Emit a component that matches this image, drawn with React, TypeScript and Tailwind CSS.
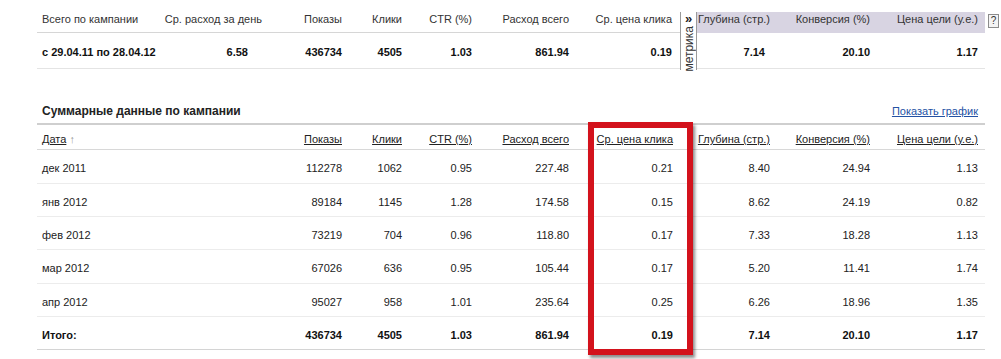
import React from 'react';

// Сводка по кампании: верхняя строка итогов + помесячная таблица
const TOP_COLS = 'grid-cols-[118px_102px_80px_60px_70px_97px_103px]';
const RIGHT_COLS = 'grid-cols-[73px_100px_108px]';
const MAIN_COLS = 'grid-cols-[238px_62px_60px_70px_97px_104px_97px_100px_108px]';

const HEADERS = ['Показы', 'Клики', 'CTR (%)', 'Расход всего', 'Ср. цена клика', 'Глубина (стр.)', 'Конверсия (%)', 'Цена цели (у.е.)'];

const ROWS: string[][] = [
  ['дек 2011', '112278', '1062', '0.95', '227.48', '0.21', '8.40', '24.94', '1.13'],
  ['янв 2012', '89184', '1145', '1.28', '174.58', '0.15', '8.62', '24.19', '0.82'],
  ['фев 2012', '73219', '704', '0.96', '118.80', '0.17', '7.33', '18.28', '1.13'],
  ['мар 2012', '67026', '636', '0.95', '105.44', '0.17', '5.20', '11.41', '1.74'],
  ['апр 2012', '95027', '958', '1.01', '235.64', '0.25', '6.26', '18.96', '1.35'],
];

const TOTAL = ['Итого:', '436734', '4505', '1.03', '861.94', '0.19', '7.14', '20.10', '1.17'];

const rowHeights = ['h-[34px]', 'h-[33px]', 'h-[33px]', 'h-[34px]', 'h-[33px]', 'h-[33px]'];

export default function App() {
  return (
    <div className="relative w-[1001px] h-[359px] overflow-hidden bg-white font-['Liberation_Sans',Arial,sans-serif] text-[11px] leading-[13px] text-[#222]">
      {/* Top summary */}
      <div className="flex">
        <div className="ml-[37px] w-[643px]">
          <div className={`grid ${TOP_COLS} pl-[5px] h-[33px] pt-[13px] border-b border-[#d6d6d6] text-[#333]`}>
            <div>Всего по кампании</div>
            <div className="text-right">Ср. расход за день</div>
            <div className="text-right">Показы</div>
            <div className="text-right">Клики</div>
            <div className="text-right">CTR (%)</div>
            <div className="text-right">Расход всего</div>
            <div className="text-right">Ср. цена клика</div>
          </div>
          <div className={`grid ${TOP_COLS} pl-[5px] h-[36px] pt-[13px] border-b border-[#e4e4e4] font-bold text-[#111]`}>
            <div>с 29.04.11 по 28.04.12</div>
            <div className="text-right pr-[14px]">6.58</div>
            <div className="text-right">436734</div>
            <div className="text-right">4505</div>
            <div className="text-right">1.03</div>
            <div className="text-right">861.94</div>
            <div className="text-right">0.19</div>
          </div>
        </div>

        {/* Metrika vertical tab */}
        <div className="mt-[12px] w-[17px] h-[58px] border-x border-[#9a9a9a] bg-white flex flex-col items-center">
          <div className="text-[13px] leading-[10px] font-bold text-[#222] mt-[2px]">»</div>
          <div className="mt-[2px] text-[12px] leading-[14px] text-[#333] [writing-mode:vertical-rl] rotate-180">метрика</div>
        </div>

        <div className="w-[288px]">
          <div className="h-[33px] pt-[12px]">
            <div className={`grid ${RIGHT_COLS} h-[21px] pt-[1px] pr-[7px] bg-[#d8d4e2] text-[#333]`}>
              <div className="text-right">Глубина (стр.)</div>
              <div className="text-right">Конверсия (%)</div>
              <div className="text-right">Цена цели (у.е.)</div>
            </div>
          </div>
          <div className={`grid ${RIGHT_COLS} h-[36px] pt-[13px] pr-[7px] border-b border-[#e4e4e4] font-bold text-[#111]`}>
            <div className="text-right pr-[5px]">7.14</div>
            <div className="text-right">20.10</div>
            <div className="text-right">1.17</div>
          </div>
        </div>

        <div className="ml-[3px] mt-[14px] w-[11px] h-[14px] border border-[#8c8c8c] bg-[#f4f4f4] text-[10px] leading-[12px] text-center text-[#333]">?</div>
      </div>

      {/* Monthly table */}
      <div className="ml-[37px] w-[948px] mt-[34px]">
        <div className="flex justify-between items-start h-[21px] pl-[5px] pr-[7px] border-b-[2px] border-[#cfcfcf]">
          <div className="text-[12px] leading-[14px] font-bold text-[#222]">Суммарные данные по кампании</div>
          <a href="#" className="text-[#2452a4] underline leading-[14px]">Показать график</a>
        </div>

        <div className={`grid ${MAIN_COLS} h-[25px] pt-[8px] pl-[5px] pr-[7px] border-b border-[#d8d8d8] text-[#222]`}>
          <div>
            <span className="underline">Дата</span> <span className="text-[#999]">↑</span>
          </div>
          {HEADERS.map((h) => (
            <div key={h} className="text-right">
              <span className="underline">{h}</span>
            </div>
          ))}
        </div>

        {[...ROWS, TOTAL].map((row, i) => {
          const isTotal = i === ROWS.length;
          return (
            <div
              key={row[0]}
              className={`grid ${MAIN_COLS} ${rowHeights[i]} pt-[12px] pl-[5px] pr-[7px] border-b ${
                isTotal ? 'border-[#d4d4d4] font-bold text-[#111]' : 'border-[#ececec]'
              }`}
            >
              {row.map((cell, j) => (
                <div key={j} className={j === 0 ? '' : 'text-right'}>
                  {cell}
                </div>
              ))}
            </div>
          );
        })}
      </div>

      {/* Red highlight frame */}
      <div className="absolute left-[588px] top-[122px] w-[105px] h-[233px] border-[6px] border-[#d3121c] shadow-[2px_3px_3px_rgba(0,0,0,0.45)]" />
    </div>
  );
}
